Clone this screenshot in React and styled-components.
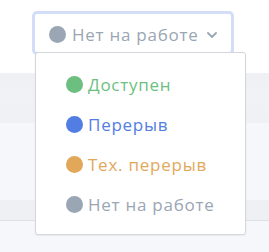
import React from "react";
import styled, { createGlobalStyle } from "styled-components";

const GlobalStyle = createGlobalStyle`
	body {
		margin: 0;
		background: #ffffff;
		font-family: "Open Sans", "Noto Sans", sans-serif;
	}
`;

const Page = styled.div`
	width: 269px;
	height: 252px;
	overflow: hidden;
	background: #f5f7fa;
	display: flex;
	flex-direction: column;
`;

const Top = styled.div`
	height: 73px;
	background: #ffffff;
	position: relative;
	padding: 11px 0 0 32px;
	box-sizing: border-box;
	z-index: 2;
`;

const HeadBand = styled.div`
	height: 50px;
	background: linear-gradient(#eef0f4, #f0f2f5 45%, #eff1f4);
`;

const Row = styled.div`
	height: 77px;
	background: #f5f7fa;
`;

const FootBand = styled.div`
	height: 20px;
	background: #eef0f3;
	border-bottom: 1px solid #dde1e6;
`;

const StatusWrap = styled.div`
	position: relative;
	width: 202px;
`;

const StatusButton = styled.button`
	width: 202px;
	height: 44px;
	box-sizing: border-box;
	border: 3px solid #d3ddf7;
	border-radius: 5px;
	background: #ffffff;
	display: flex;
	align-items: center;
	padding: 3px 0 0 14px;
	gap: 6px;
	font-family: inherit;
	font-size: 17px;
	letter-spacing: 0.75px;
	color: #9aa6b3;
	cursor: pointer;
	white-space: nowrap;
`;

const Dot = styled.span`
	width: 17px;
	height: 17px;
	border-radius: 50%;
	background: ${(p) => p.color};
	flex-shrink: 0;
`;

const Menu = styled.div`
	position: absolute;
	top: 41px;
	left: 3px;
	width: 211px;
	box-sizing: border-box;
	background: #ffffff;
	border: 1px solid #d3d6db;
	border-radius: 3px;
	box-shadow: 0 1px 2px rgba(0, 0, 0, 0.06);
	padding: 11px 0 10px 30px;
`;

const Item = styled.div`
	height: 40px;
	display: flex;
	align-items: center;
	gap: 5px;
	font-size: 17px;
	letter-spacing: 0.75px;
	color: ${(p) => p.color};
	white-space: nowrap;
`;

const Chevron = () => (
	<svg width="10" height="6" viewBox="0 0 10 6" style={{ marginLeft: 2 }}>
		<path d="M1 1l4 4 4-4" fill="none" stroke="#9aa6b3" strokeWidth="1.8" strokeLinecap="round" strokeLinejoin="round" />
	</svg>
);

const statuses = [
	{ label: "Доступен", color: "#6cbf7f" },
	{ label: "Перерыв", color: "#527de3" },
	{ label: "Тех. перерыв", color: "#e2a85a" },
	{ label: "Нет на работе", color: "#9aa6b3" },
];

const App = () => {
	return (
		<Page>
			<GlobalStyle />
			<Top>
				<StatusWrap>
					<StatusButton>
						<Dot color="#9aa6b3" />
						Нет на работе
						<Chevron />
					</StatusButton>
					<Menu>
						{statuses.map((s) => (
							<Item key={s.label} color={s.color}>
								<Dot color={s.color} />
								{s.label}
							</Item>
						))}
					</Menu>
				</StatusWrap>
			</Top>
			<HeadBand />
			<Row />
			<FootBand />
		</Page>
	);
};

export default App;
